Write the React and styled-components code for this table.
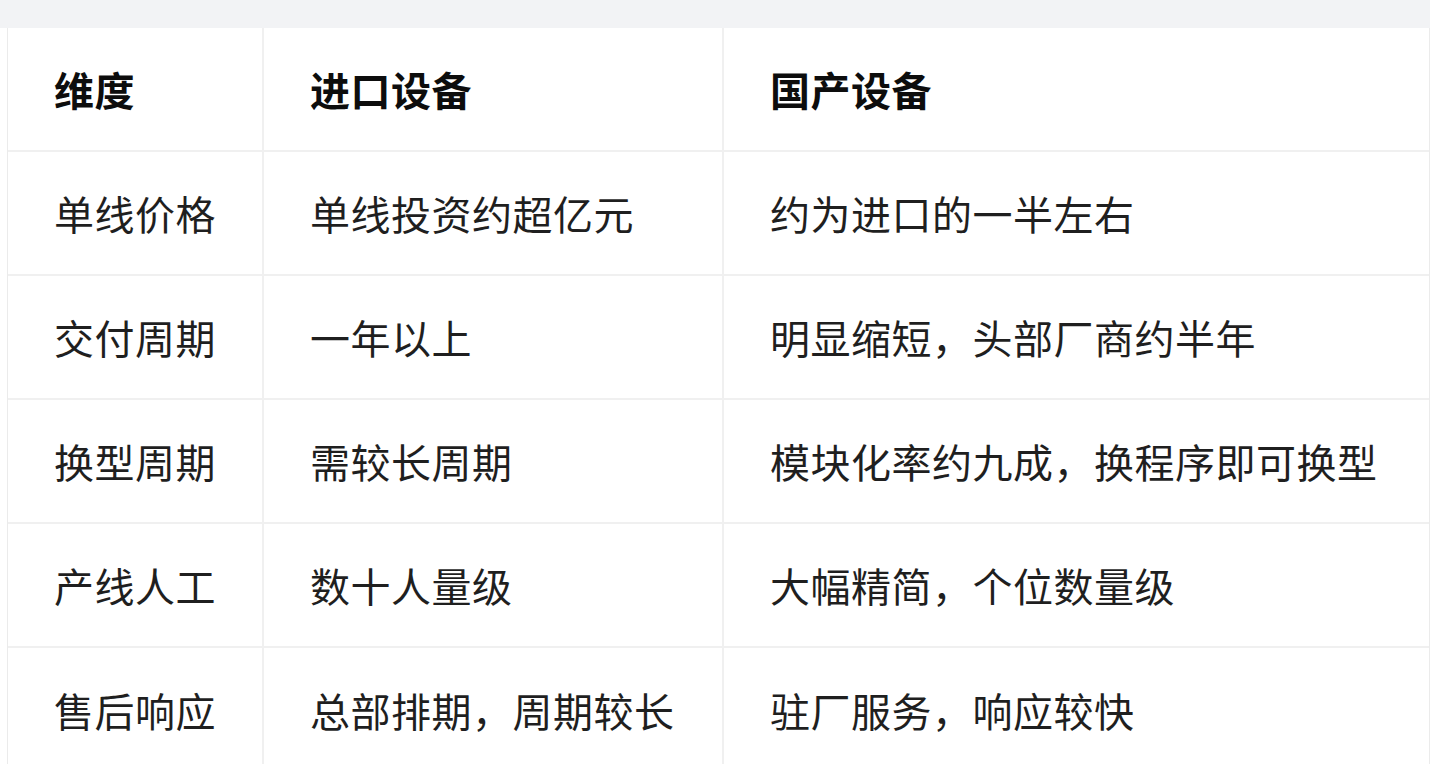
import React from "react";
import styled, { createGlobalStyle } from "styled-components";

const GlobalStyle = createGlobalStyle`
  html, body {
    margin: 0;
    padding: 0;
    background: #ffffff;
  }
  body {
    font-family: "Noto Sans CJK SC", "Noto Sans", sans-serif;
    overflow: hidden;
  }
`;

const Page = styled.div`
  width: 1438px;
  height: 764px;
  overflow: hidden;
`;

const TopBand = styled.div`
  width: 1430px;
  height: 28px;
  background: #f2f3f5;
`;

const TableCard = styled.div`
  width: 1421px;
  margin-left: 7px;
  border: 1px solid #ebebeb;
  border-top: none;
  border-radius: 0 0 10px 10px;
  overflow: hidden;
  background: #fff;
`;

const Row = styled.div`
  display: grid;
  grid-template-columns: 256px 460px 1fr;
  height: 124px;
  border-bottom: ${(p) => (p.$last ? "none" : "2px solid #f0f0f0")};
  box-sizing: border-box;
`;

const Cell = styled.div`
  display: flex;
  align-items: center;
  padding-left: 46px;
  box-sizing: border-box;
  border-right: ${(p) => (p.$lastCol ? "none" : "2px solid #f0f0f0")};
  font-size: 40px;
  line-height: 1;
  letter-spacing: 0.5px;
  font-weight: ${(p) => (p.$head ? 700 : 400)};
  color: ${(p) => (p.$head ? "#0d0d0d" : "#1f1f1f")};
  white-space: nowrap;
`;

const header = ["维度", "进口设备", "国产设备"];

const rows = [
  ["单线价格", "单线投资约超亿元", "约为进口的一半左右"],
  ["交付周期", "一年以上", "明显缩短，头部厂商约半年"],
  ["换型周期", "需较长周期", "模块化率约九成，换程序即可换型"],
  ["产线人工", "数十人量级", "大幅精简，个位数量级"],
  ["售后响应", "总部排期，周期较长", "驻厂服务，响应较快"],
];

export default function App() {
  return (
    <Page>
      <GlobalStyle />
      <TopBand />
      <TableCard>
        <Row>
          {header.map((h, i) => (
            <Cell key={h} $head $lastCol={i === 2}>
              {h}
            </Cell>
          ))}
        </Row>
        {rows.map((r, ri) => (
          <Row key={r[0]} $last={ri === rows.length - 1}>
            {r.map((c, ci) => (
              <Cell key={ci} $lastCol={ci === 2}>
                {c}
              </Cell>
            ))}
          </Row>
        ))}
      </TableCard>
    </Page>
  );
}
